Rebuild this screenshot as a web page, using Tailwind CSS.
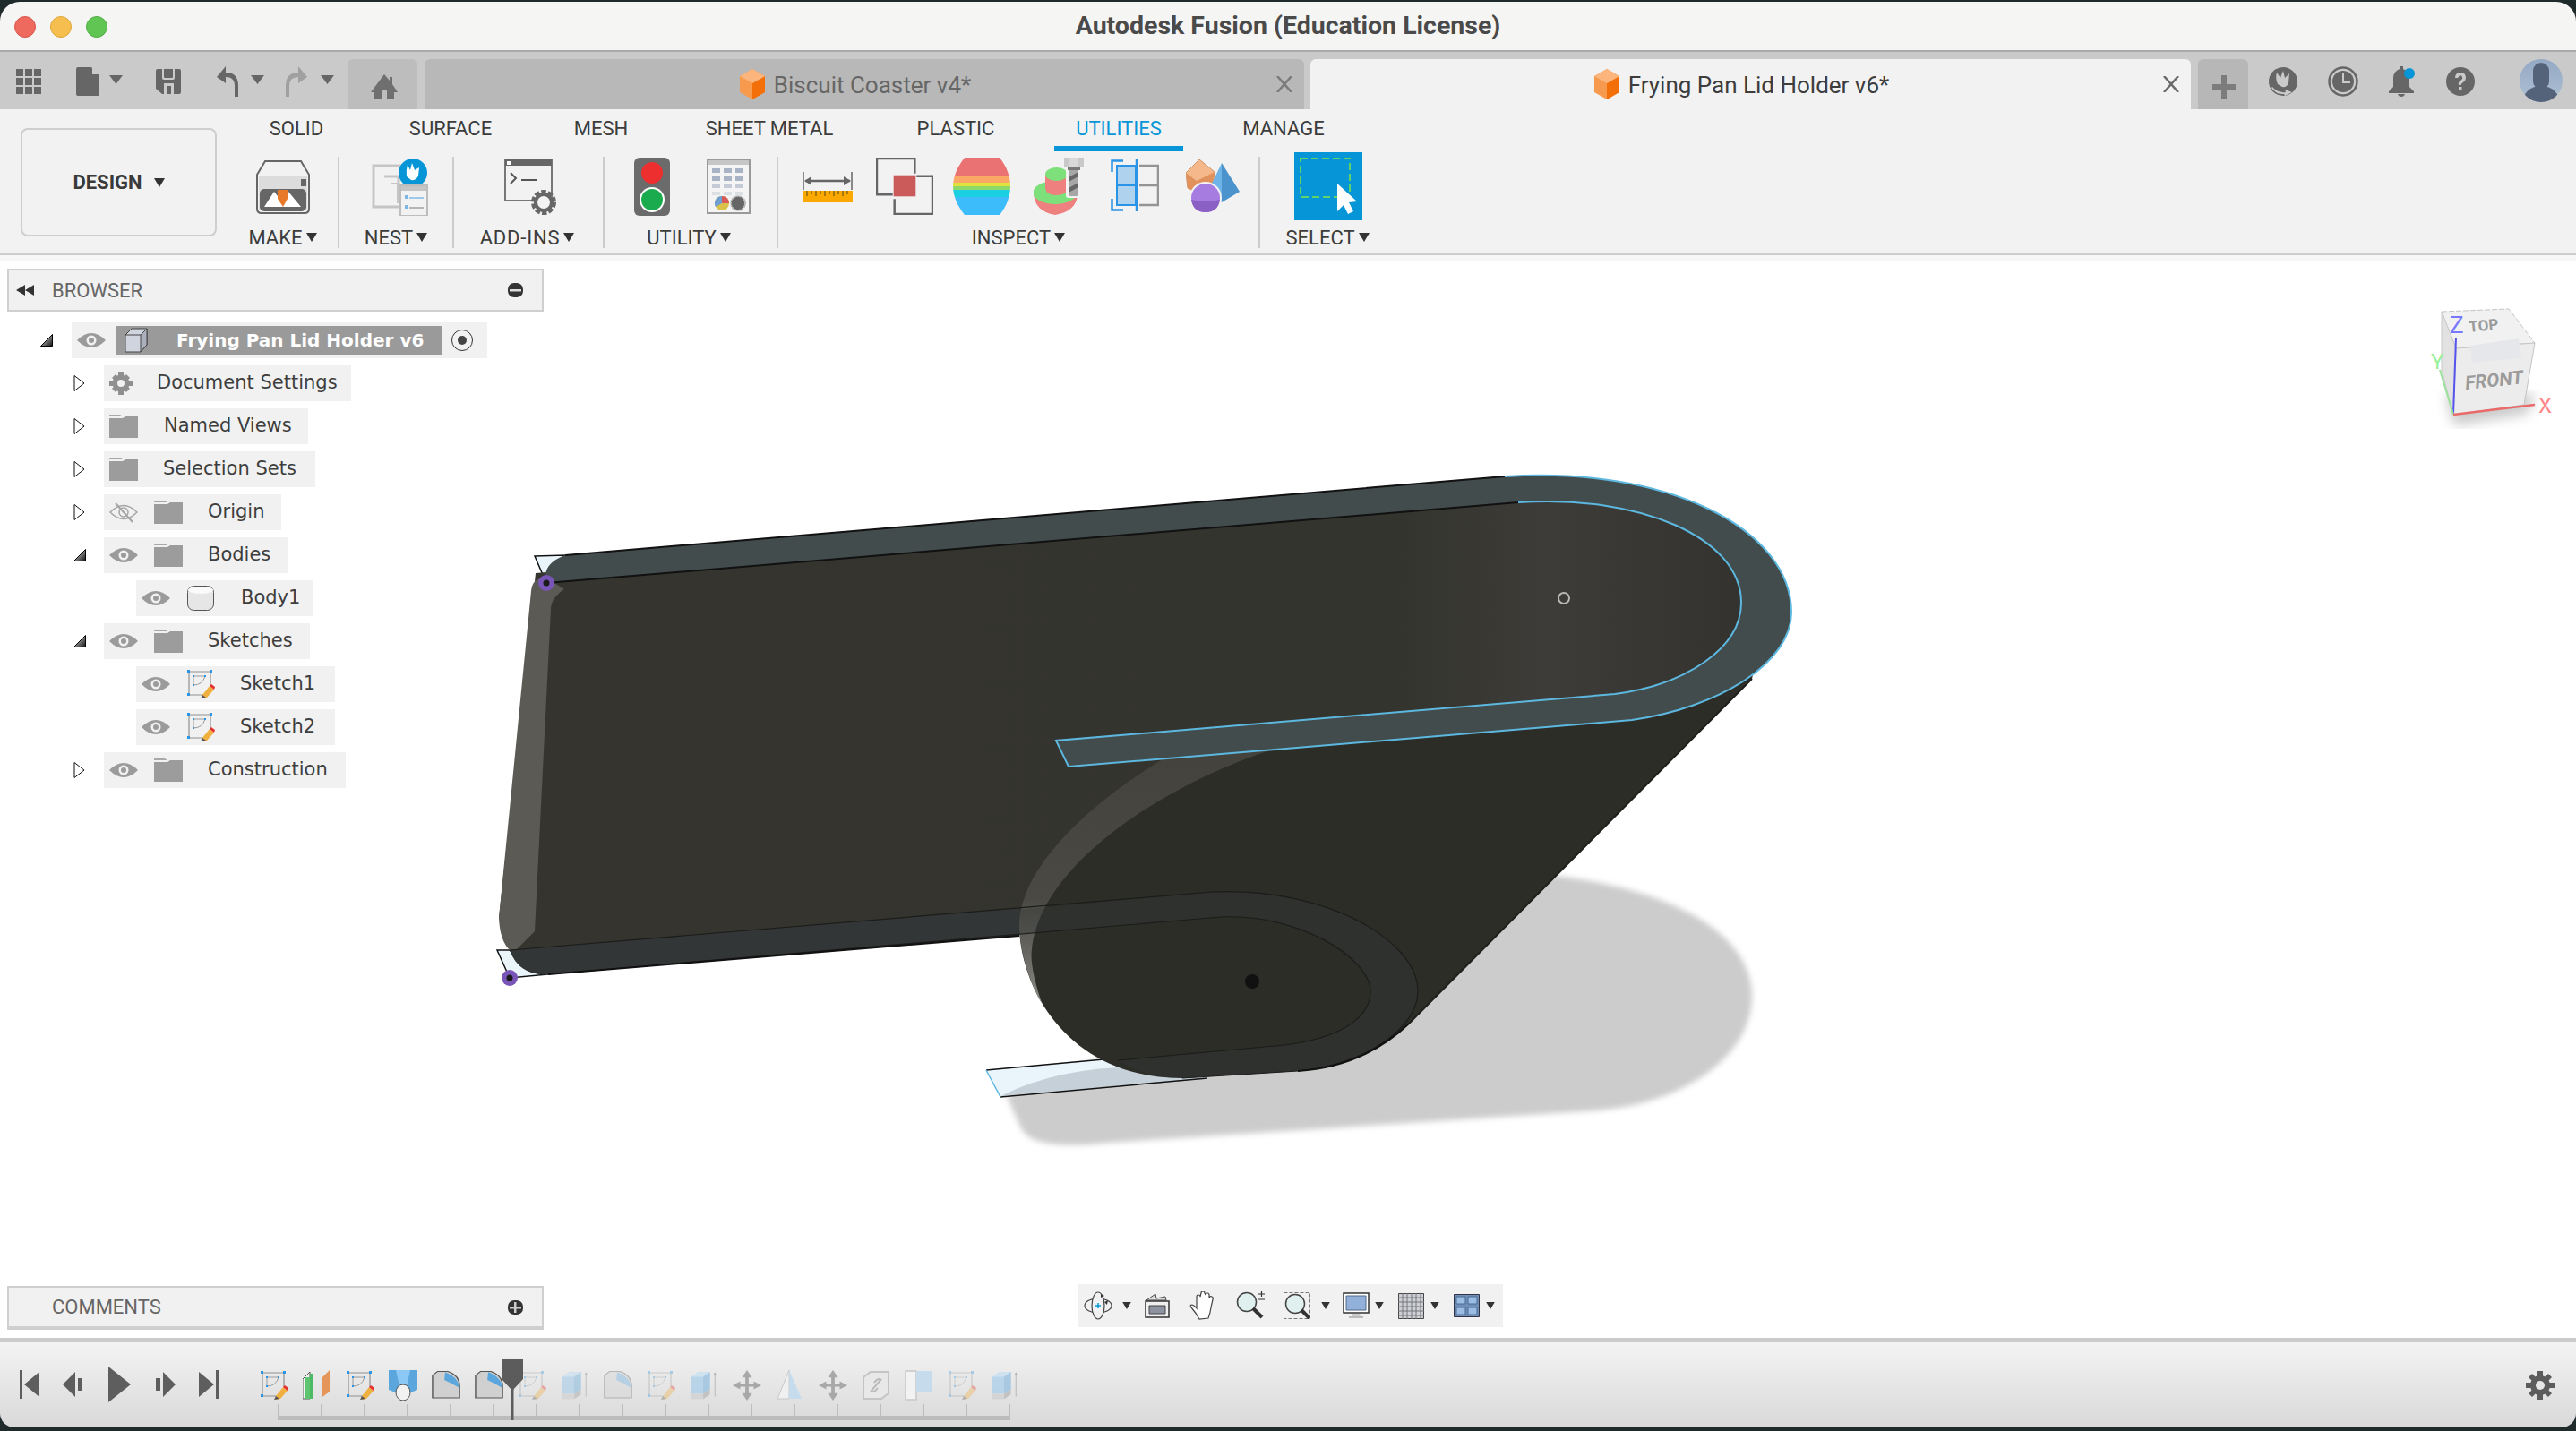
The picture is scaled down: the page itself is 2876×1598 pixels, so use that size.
<!DOCTYPE html>
<html lang="en">
<head>
  <meta charset="UTF-8">
  <title>Autodesk Fusion</title>
  <script src="https://cdn.jsdelivr.net/npm/@tailwindcss/browser@4"></script>
</head>
<body class="bg-[#1f2a2a] overflow-hidden font-['Roboto',sans-serif]">

  <!-- shared icons -->
  <svg class="absolute w-0 h-0">
    <defs>
      <linearGradient id="triGrad" x1="0" y1="0" x2="1" y2="1"><stop offset="0" stop-color="#eee"/><stop offset="1" stop-color="#111"/></linearGradient>
      <linearGradient id="faceGrad" x1="0" y1="0" x2="1" y2="0"><stop offset="0" stop-color="#35342f"/><stop offset="0.72" stop-color="#34342f"/><stop offset="0.84" stop-color="#3d3c38"/><stop offset="1" stop-color="#33322e"/></linearGradient>
      <linearGradient id="rimGrad" gradientUnits="userSpaceOnUse" x1="0" y1="830" x2="0" y2="1120"><stop offset="0" stop-color="#43423d"/><stop offset="0.6" stop-color="#4a4944"/><stop offset="0.8" stop-color="#66655f"/><stop offset="1" stop-color="#8a8984"/></linearGradient>
      <clipPath id="zebraClip"><path d="M13 0h39C60 10 64 21 64 32S60 54 52 64H13C5 54 0 43 0 32S5 10 13 0z"/></clipPath>
      <filter id="soft"><feGaussianBlur stdDeviation="3"/></filter>
      <filter id="cubeShadow"><feGaussianBlur stdDeviation="7"/></filter>
      <symbol id="caret" viewBox="0 0 12 10"><path d="M0 0h12L6 10z" fill="#333"/></symbol>
      <symbol id="caretGray" viewBox="0 0 15 10"><path d="M0 0h15L7.500 10z" fill="#666"/></symbol>
      <symbol id="eye" viewBox="0 0 32 22"><path d="M0 11Q16-5 32 11 16 27 0 11z" fill="#9b9b9b"/><circle cx="16" cy="11" r="5.500" fill="#f1f1f1"/><circle cx="16" cy="11" r="3" fill="#9b9b9b"/></symbol>
      <symbol id="eyeOff" viewBox="0 0 32 24"><path d="M1 12Q16-3 31 12 16 27 1 12z" fill="none" stroke="#a5a5a5" stroke-width="1.500"/><circle cx="16" cy="12" r="5" fill="none" stroke="#a5a5a5" stroke-width="1.500"/><path d="M7 2l19 21" stroke="#a5a5a5" stroke-width="2"/></symbol>
      <symbol id="folder" viewBox="0 0 32 26"><path d="M0 0h12l3 2h-15z" fill="#a8a8a8"/><path d="M0 4h15l3-2h14v24H0z" fill="#9c9c9c"/></symbol>
      <symbol id="triOpen" viewBox="0 0 14 14"><path d="M13.500.5v13H.5z" fill="url(#triGrad)" stroke="#000"/></symbol>
      <symbol id="triClosed" viewBox="0 0 13 18"><path d="M1 .5L12 9 1 17.500z" fill="#fff" stroke="#111"/></symbol>
      <symbol id="sketch" viewBox="0 0 32 32">
        <path d="M3 2h24M3 2v26M3 28h16" stroke="#8f8f8f" stroke-width="1.200" fill="none"/><path d="M27 2v16" stroke="#8f8f8f" stroke-width="1.200"/>
        <path d="M8 7h13M8 7v10M8 17Q18 17 21 7" stroke="#9a9a9a" fill="none"/>
        <path d="M1 0h3v3H1zM26 0h3v3h-3zM1 26h3v3H1zM7 6h2v2H7zM20 6h2v2h-2zM7 16h2v2H7z" fill="#2a94e6"/>
        <path d="M18 28l8-10 5 4-8 9-5 1z" fill="#f0b040"/><path d="M26 18l2-2 4 3-1 3z" fill="#e63030"/><path d="M16 32l2-4 4 3z" fill="#555"/>
      </symbol>
      <symbol id="extrude" viewBox="0 0 34 46">
        <path d="M2 10l8-7h14v26l-8 7H2z" fill="#a6cdea"/><path d="M2 10l8-7h14l-8 7z" fill="#c6e0f3"/><path d="M16 10l8-7v26l-8 7z" fill="#8fbde0"/>
        <path d="M2 36h14v8H2z" fill="#cfcfcf"/><path d="M16 36l8-7v8l-8 7z" fill="#b5b5b5"/><path d="M30 6v34" stroke="#999"/><path d="M28 8l2-5 2 5z" fill="#999"/>
      </symbol>
      <symbol id="fillet" viewBox="0 0 34 46">
        <path d="M1 42V8l6-6h12q14 6 14 22v18z" fill="#d0d0d0" stroke="#555" stroke-width="1.500"/>
        <path d="M16 3q16 8 17 24-8-6-18-12z" fill="#5aa6dd"/>
      </symbol>
      <symbol id="move" viewBox="0 0 34 46"><path d="M17 0l6 11h-4v10h6v-4l9 6-9 6v-4h-6v10h4l-6 11-6-11h4V25H9v4l-9-6 9-6v4h6V11h-4z" fill="#a8a8a8"/></symbol>
    </defs>
  </svg>

  <div class="relative flex flex-col w-[2876px] h-[1598px] pt-[2px]">
    <!-- title bar -->
    <div class="relative flex items-center justify-center h-[56px] bg-[#f5f5f4] rounded-t-[22px] border-b-2 border-[#a9a9a9]">
      <div class="absolute left-[16px] top-[16px] flex gap-[16px]">
        <div class="w-[24px] h-[24px] rounded-full bg-[#ee6a5f] border border-[#d9574c]"></div>
        <div class="w-[24px] h-[24px] rounded-full bg-[#f6be4f] border border-[#dfa63a]"></div>
        <div class="w-[24px] h-[24px] rounded-full bg-[#61c554] border border-[#52ad46]"></div>
      </div>
      <span class="text-[28.500px] font-bold text-[#4a4a4a] leading-none">Autodesk Fusion (Education License)</span>
    </div>

    <!-- tab bar -->
    <div class="flex items-end h-[64px] bg-[#cacaca]">
      <div class="flex items-center w-[388px] h-[63px] pl-[18px]">
        <svg width="28" height="28" viewBox="0 0 28 28"><path d="M0 0h8v8H0zM10 0h8v8h-8zM20 0h8v8h-8zM0 10h8v8H0zM10 10h8v8h-8zM20 10h8v8h-8zM0 20h8v8H0zM10 20h8v8h-8zM20 20h8v8h-8z" fill="#666"/></svg>
        <svg class="ml-[39px]" width="26" height="32" viewBox="0 0 26 32"><path d="M2 0h15l9 9v21q0 2-2 2H2q-2 0-2-2V2q0-2 2-2z" fill="#666"/><path d="M18 0l8 8h-8z" fill="#cacaca"/></svg>
        <svg class="ml-[11px] mb-[4px]" width="15" height="10"><use href="#caretGray"/></svg>
        <svg class="ml-[37px]" width="28" height="28" viewBox="0 0 28 28"><path d="M2 0h24q2 0 2 2v24q0 2-2 2H7l-7-6V2q0-2 2-2z" fill="#666"/><path d="M7 0h14v10q0 2-2 2H9q-2 0-2-2zM9 28V16h11v12h-3v-9h-5v9z" fill="#cacaca"/><path d="M9 0h10v9q0 1-1 1h-8q-1 0-1-1z" fill="#666"/></svg>
        <svg class="ml-[38px]" width="27" height="36" viewBox="0 0 27 36"><path d="M2 13L12 1v7q14 0 14 15v12h-4V23q0-10-10-10v7z" fill="#666"/></svg>
        <svg class="ml-[13px] mb-[4px]" width="15" height="10"><use href="#caretGray"/></svg>
        <svg class="ml-[23px]" width="27" height="36" viewBox="0 0 27 36"><path d="M25 13L15 1v7Q1 8 1 23v12h4V23q0-10 10-10v7z" fill="#a0a0a0"/></svg>
        <svg class="ml-[13px] mb-[4px]" width="15" height="10"><use href="#caretGray"/></svg>
      </div>
      <div class="flex items-center justify-center w-[78px] h-[56px] bg-[#bdbdbd] rounded-t-[6px] pt-[6px] pl-[4px]">
        <svg width="30" height="28" viewBox="0 0 30 28"><path d="M15 0l6 7V3h3v8l6 9h-4v8H4v-8H0z" fill="#6f6f6f"/><path d="M13 18h5v10h-5z" fill="#bdbdbd"/></svg>
      </div>
      <div class="relative flex items-center justify-center gap-[10px] w-[982px] h-[56px] ml-[8px] pr-[20px] pt-[2px] bg-[#b8b8b8] rounded-t-[6px] text-[26px] text-[#666]">
        <svg class="-mt-[2px]" width="28" height="34" viewBox="0 0 28 34"><path d="M14 0l14 8v18l-14 8-14-8V8z" fill="#f79a4e"/><path d="M14 16l14-8v18l-14 8z" fill="#f26f0a"/><path d="M14 0l14 8-14 8L0 8z" fill="#fbb57d"/></svg>
        <span>Biscuit Coaster v4*</span>
        <svg class="absolute right-[13px] top-[19px]" width="18" height="18" viewBox="0 0 18 18"><path d="M1 0l16 18M17 0L1 18" stroke="#7a7a7a" stroke-width="2.500"/></svg>
      </div>
      <div class="relative flex items-center justify-center gap-[10px] w-[983px] h-[56px] ml-[7px] pr-[20px] pt-[2px] bg-[#f2f2f2] rounded-t-[6px] text-[26px] text-[#3d3d3d]">
        <svg class="-mt-[2px]" width="28" height="34" viewBox="0 0 28 34"><path d="M14 0l14 8v18l-14 8-14-8V8z" fill="#f79a4e"/><path d="M14 16l14-8v18l-14 8z" fill="#f26f0a"/><path d="M14 0l14 8-14 8L0 8z" fill="#fbb57d"/></svg>
        <span>Frying Pan Lid Holder v6*</span>
        <svg class="absolute right-[13px] top-[19px]" width="18" height="18" viewBox="0 0 18 18"><path d="M1 0l16 18M17 0L1 18" stroke="#6a6a6a" stroke-width="2.500"/></svg>
      </div>
      <div class="flex items-center justify-center w-[56px] h-[56px] ml-[8px] bg-[#b7b7b7] rounded-t-[6px] pt-[6px] pl-[2px]">
        <svg width="26" height="26" viewBox="0 0 26 26"><path d="M10 0h6v10h10v6H16v10h-6V16H0v-6h10z" fill="#7c7c7c"/></svg>
      </div>
      <div class="flex items-center h-[63px] pl-[23px]">
        <svg width="32" height="32" viewBox="0 0 32 32"><circle cx="16" cy="16" r="16" fill="#666"/><path d="M9 6l4 6 3-8 2 8 5-5-1 11q-2 5-7 4l-5-3q-3-6-1-13zM4 22q6 7 15 6l-1-3 8 3-8 4-1-2Q8 31 3 23z" fill="#cacaca"/></svg>
        <svg class="ml-[34px]" width="34" height="34" viewBox="0 0 34 34"><circle cx="17" cy="17" r="15.500" fill="none" stroke="#666" stroke-width="2.500"/><circle cx="17" cy="17" r="12" fill="#666"/><path d="M16 8h2v9h7v2h-9z" fill="#cacaca"/></svg>
        <svg class="ml-[33px]" width="30" height="34" viewBox="0 0 30 34"><path d="M13 0h4v3q7 3 7 10v10l5 5v2H1v-2l5-5V13q0-7 7-10z" fill="#666"/><path d="M11 31h8q-1 3-4 3t-4-3z" fill="#666"/><circle cx="24" cy="8" r="6" fill="#0696d7"/></svg>
        <svg class="ml-[35px]" width="32" height="32" viewBox="0 0 32 32"><circle cx="16" cy="16" r="16" fill="#666"/><path d="M10 12q0-6 6-6t6 6q0 3-3 5t-2 3h-3q-1-3 2-5t2-4-2-2-3 3zM14 22h3.500v4H14z" fill="#cacaca"/></svg>
        <div class="relative self-start ml-[50px] mt-[7px] w-[48px] h-[48px] rounded-full overflow-hidden bg-gradient-to-b from-[#93a8c4] to-[#afc0d3]">
          <div class="absolute left-[15px] top-[4px] w-[18px] h-[30px] rounded-full bg-[#54627a]"></div>
          <div class="absolute left-[3px] top-[30px] w-[42px] h-[24px] rounded-t-[20px] bg-[#54627a]"></div>
        </div>
      </div>
    </div>

    <!-- ribbon -->
    <div class="flex h-[163px] pl-[23px] bg-[#f2f2f2] border-b-2 border-[#cdcdcd]">
      <div class="flex items-center justify-center gap-[13px] w-[219px] h-[121px] mt-[21px] border-2 border-[#cecece] rounded-[8px]">
        <span class="text-[22px] font-bold text-[#3a3a3a]">DESIGN</span>
        <svg width="12" height="10"><use href="#caret"/></svg>
      </div>
      <div class="ml-[9px] flex flex-col">
        <div class="flex gap-[47px] h-[53px] pl-[26px] text-[22px] text-[#3c3c3c] text-center leading-[44px]">
          <div class="w-[108px]">SOLID</div>
          <div class="w-[142px]">SURFACE</div>
          <div class="w-[100px]">MESH</div>
          <div class="w-[182px]">SHEET METAL</div>
          <div class="w-[140px]">PLASTIC</div>
          <div class="w-[144px] h-[47px] -ml-[7px] text-[#0696d7] border-b-[6px] border-[#0696d7]">UTILITIES</div>
          <div class="w-[130px]">MANAGE</div>
        </div>
        <div class="flex h-[102px] text-[22px] text-[#3c3c3c]">
          <!-- make -->
          <div class="flex flex-col items-center justify-between w-[128px] border-r-2 border-[#cccccc]">
            <svg class="mt-[4px] ml-[3px]" width="60" height="60" viewBox="0 0 60 60"><path d="M1 16L10 1h40l9 15v38q0 5-5 5H6q-5 0-5-5z" fill="#f2f2f2" stroke="#666" stroke-width="2"/><path d="M3 17h54v38H3z" fill="#dcdcdc"/><path d="M50 21h6v8h-6z" fill="#666"/><rect x="4" y="32" width="52" height="25" rx="5" fill="#666"/><path d="M9 52l11-17 8 10 8-10 14 17z" fill="#fff"/><path d="M24 33h11v10l-5 9-6-9z" fill="#e8792b"/></svg>
            <div class="flex items-center gap-[4px] h-[24px] ml-[3px]"><span>MAKE</span><svg width="12" height="10"><use href="#caret"/></svg></div>
          </div>
          <!-- nest -->
          <div class="flex flex-col items-center justify-between w-[128px] border-r-2 border-[#cccccc]">
            <svg class="mt-[2px] ml-[10px]" width="64" height="64" viewBox="0 0 64 64"><path d="M2 8h34v46H2z" fill="none" stroke="#c5c5c5" stroke-width="3"/><path d="M14 20h16v30" fill="none" stroke="#c5c5c5" stroke-width="3"/><path d="M21 28h8v22" fill="none" stroke="#c5c5c5" stroke-width="2"/><circle cx="46" cy="16" r="16" fill="#0696d7"/><path d="M40 7l3 6 2-8 3 8 5-3-1 9q-2 6-8 5l-5-4q-1-7 1-13z" fill="#fff"/><path d="M32 30h30v34H32z" fill="#f2f2f2" stroke="#bdbdbd" stroke-width="2"/><path d="M33 31h28v5H33z" fill="#c5c5c5"/><path d="M37 41h3v4h-3zM37 52h3v4h-3z" fill="#7bb7e6"/><path d="M42 43h16v2H42z" fill="#9cc9ec"/><path d="M42 54h16v2H42z" fill="#b5b5b5"/></svg>
            <div class="flex items-center gap-[4px] h-[24px]"><span>NEST</span><svg width="12" height="10"><use href="#caret"/></svg></div>
          </div>
          <!-- add-ins -->
          <div class="flex flex-col items-center justify-between w-[168px] border-r-2 border-[#cccccc]">
            <svg class="mt-[2px] ml-[6px]" width="60" height="64" viewBox="0 0 60 64"><path d="M1 1h52v46H1z" fill="#f2f2f2" stroke="#777" stroke-width="2"/><path d="M1 1h52v7H1z" fill="#666"/><path d="M3 3h5v4H3z" fill="#fff"/><path d="M7 16l6 6-6 6" fill="none" stroke="#555" stroke-width="2"/><path d="M19 24h17" stroke="#555" stroke-width="2"/><circle cx="44" cy="49" r="11" fill="#f2f2f2" stroke="#666" stroke-width="6" stroke-dasharray="5 2"/><circle cx="44" cy="49" r="9" fill="none" stroke="#666" stroke-width="4"/></svg>
            <div class="flex items-center gap-[4px] h-[24px] -ml-[3px]"><span class="tracking-[0.8px]">ADD-INS</span><svg width="12" height="10"><use href="#caret"/></svg></div>
          </div>
          <!-- utility -->
          <div class="flex flex-col items-center justify-between w-[194px] border-r-2 border-[#cccccc]">
            <div class="flex gap-[41px] mt-[1px] ml-[5px]">
              <svg width="40" height="65" viewBox="0 0 40 65"><rect width="40" height="65" rx="6" fill="#6b6b6b"/><ellipse cx="20" cy="17" rx="12" ry="12" fill="#ee2f2f"/><circle cx="20" cy="47" r="14" fill="#fff"/><circle cx="20" cy="47" r="12" fill="#1aab4e"/></svg>
              <svg class="mt-[1px]" width="50" height="62" viewBox="0 0 50 62"><path d="M1 1h47v60H1z" fill="#f4f4f4" stroke="#9a9a9a" stroke-width="2"/><path d="M2 2h45v5H2z" fill="#c6c6c6"/><path d="M6 11h9v5H6zM19 11h9v5h-9zM32 11h9v5h-9zM6 20h9v5H6zM19 20h9v5h-9zM32 20h9v5h-9z" fill="#a8b4c6"/><path d="M6 29h9v4H6zM19 29h9v4h-9zM32 29h9v4h-9z" fill="#c4cbd6"/><path d="M6 37h9v4H6zM19 37h9v4h-9zM32 37h9v4h-9z" fill="#dcdfe4"/><circle cx="17" cy="50" r="8" fill="#d9c14a"/><path d="M17 50V42a8 8 0 0 1 8 8z" fill="#d85a5a"/><path d="M17 50l-7 4a8 8 0 0 1 7-12z" fill="#6e9fd0"/><circle cx="35" cy="50" r="8" fill="#666" stroke="#bbb" stroke-width="2" stroke-dasharray="2 1"/></svg>
            </div>
            <div class="flex items-center gap-[4px] h-[24px] -ml-[4px]"><span>UTILITY</span><svg width="12" height="10"><use href="#caret"/></svg></div>
          </div>
          <!-- inspect -->
          <div class="flex flex-col items-center justify-between w-[538px] border-r-2 border-[#cccccc]">
            <div class="flex items-start self-start h-[66px] mt-[1px] ml-[27px]">
              <svg class="mt-[16px]" width="56" height="34" viewBox="0 0 56 34"><path d="M1 0v20M55 0v20" stroke="#666" stroke-width="1.500"/><path d="M3 10h50" stroke="#666" stroke-width="2.500"/><path d="M2 10l8-5v10zM54 10l-8-5v10z" fill="#666"/><path d="M0 21h56v13H0z" fill="#fba800"/><path d="M5 21v6M10 21v4M15 21v6M20 21v4M25 21v6M30 21v4M35 21v6M40 21v4M45 21v6M50 21v4" stroke="#8a6a10" stroke-width="1.500"/></svg>
              <svg class="ml-[26px]" width="64" height="64" viewBox="0 0 65 65"><path d="M19 42H1V1H44V18M46 21H64V64H21V47" fill="none" stroke="#666" stroke-width="2.500"/><path d="M20 20h25v24H20z" fill="#cb5a5a"/></svg>
              <svg class="ml-[22px]" width="64" height="64" viewBox="0 0 64 64"><g clip-path="url(#zebraClip)"><path d="M0 0h64v20H0z" fill="#ea7272"/><path d="M0 20h64v8H0z" fill="#fba765"/><path d="M0 28h64v4H0z" fill="#dfe23a"/><path d="M0 32h64v4H0z" fill="#8ed86a"/><path d="M0 36h64v8H0z" fill="#1bd0e0"/><path d="M0 44h64v20H0z" fill="#3dbcfb"/></g></svg>
              <svg class="ml-[26px]" width="56" height="64" viewBox="0 0 56 64"><path d="M0 38Q0 60 24 64 48 60 49 41z" fill="#ef8080"/><ellipse cx="24" cy="39" rx="24.500" ry="13" fill="#7ee07a"/><path d="M13 18V34Q14 42 25 42 37 42 38 34V18z" fill="#ef8080"/><ellipse cx="25.500" cy="18.500" rx="12.500" ry="7.500" fill="#7ee07a"/><path d="M36 14h16v28q0 3-3 3h-10q-3 0-3-3z" fill="#f2f2f2"/><path d="M34 0h22v10H34z" fill="#c9c9c9"/><path d="M39 0h11v10H39z" fill="#d9d9d9"/><path d="M38 10h14v4H38z" fill="#777"/><path d="M39 14h11v27q0 2-2 2h-7q-2 0-2-2z" fill="#a6a6a6"/><path d="M39 22l11-6v5l-11 6zM39 34l11-6v5l-11 6z" fill="#666"/></svg>
              <svg class="ml-[30px] mt-[2px]" width="54" height="58" viewBox="0 0 54 58"><path d="M32 7H53V51H32M32 29H53" fill="none" stroke="#949494" stroke-width="2.500"/><path d="M7 7h21v44H7z" fill="#afd2ee" stroke="#2a94e6" stroke-width="2"/><path d="M7 29h22" stroke="#2a94e6" stroke-width="2"/><path d="M29 0v58" stroke="#2a94e6" stroke-width="2.500"/><path d="M14 1.500H1.500V14M14 56.500H1.500V44" fill="none" stroke="#2a94e6" stroke-width="2.500"/></svg>
              <svg class="ml-[30px] mt-[2px]" width="60" height="60" viewBox="0 0 60 60"><path d="M15 0L32 14 30 30 15 38 2 32 0 15z" fill="#f4b88a" stroke="#cf9468"/><path d="M0 15L12 24 15 38 2 32z" fill="#e0915c"/><path d="M12 24L32 14 30 30 15 38z" fill="#e0915c"/><path d="M40 4L26 33 40 48z" fill="#6fb4e6"/><path d="M40 4L60 36 40 48z" fill="#4a93cc"/><circle cx="22" cy="43" r="18" fill="#f2f2f2"/><circle cx="22" cy="43" r="16" fill="#a67ce0"/><path d="M6 45q16 4 32 0-2 14-16 14T6 45z" fill="#8b60c4"/></svg>
            </div>
            <div class="flex items-center gap-[4px] h-[24px]"><span>INSPECT</span><svg width="12" height="10"><use href="#caret"/></svg></div>
          </div>
          <!-- select -->
          <div class="flex flex-col items-center justify-between w-[154px] pr-[2px]">
            <svg class="-mt-[5px]" width="76" height="76" viewBox="0 0 76 76"><path d="M0 0h76v76H0z" fill="#0696d7"/><path d="M7 7h55v43H7z" fill="none" stroke="#5fd36a" stroke-width="2" stroke-dasharray="8 4"/><path d="M48 35v31l7-7 5 10 6-3-5-10 9-1z" fill="#fff"/></svg>
            <div class="flex items-center gap-[4px] h-[24px] -ml-[2px]"><span>SELECT</span><svg width="12" height="10"><use href="#caret"/></svg></div>
          </div>
        </div>
      </div>
    </div>
    <div class="h-[7px] bg-[#f7f7f7]"></div>

    <!-- canvas -->
    <div class="relative flex-1 bg-white">
      <svg class="absolute inset-0" width="2876" height="1202" viewBox="0 292 2876 1202">
        <!-- ground shadow -->
        <path d="M1124 1224L1726 977C1860 990 1956 1040 1956 1112C1956 1180 1880 1232 1784 1240L1240 1276C1180 1282 1150 1278 1140 1260Z" fill="#cccccc" filter="url(#soft)"/>
        <!-- construction quads -->
        <path d="M1101 1195L1348 1170V1204L1117 1225Z" fill="#eaf4fb"/>
        <path d="M1117 1224Q1190 1188 1290 1192L1348 1204Z" fill="#c5d0d8"/>
        <path d="M1101 1195L1243 1182M1117 1225L1348 1204" stroke="#111" stroke-width="1.500"/>
        <path d="M1101 1195L1117 1225" stroke="#5db8e0" stroke-width="1.500"/>
        <path d="M597 621L631 620 610 651Z" fill="#eaf4fb" stroke="#111" stroke-width="1.500"/>
        <path d="M555 1061L569 1092 612 1088 569 1061Z" fill="#eaf4fb" stroke="#111" stroke-width="1.500"/>
        <!-- main wall -->
        <path d="M598 640L1695 550C1830 545 1950 600 1950 673C1950 725 1880 770 1803 780L1401 837L1138 1020V1045L612 1088Q580 1090 569 1061L557 1025Z" fill="url(#faceGrad)"/>
        <path d="M610 645Q594 645 593 660L557 1025Q558 1050 569 1061L575 1062L597 1040L615 680Q615 668 630 658Z" fill="#5b5a54"/>
        <!-- lower band of the wall -->
        <path d="M569 1061L1145 1014V1043L612 1088Q580 1090 569 1061Z" fill="#333636"/>
        <!-- curved lobe -->
        <path d="M1345 822C1230 880 1138 965 1138 1033C1138 1100 1190 1204 1320 1204L1449 1196C1510 1192 1550 1165 1573 1143L1956 758L1965 720L1900 775L1822 790Z" fill="#2d2d28"/>
        <path d="M1345 822C1230 880 1138 965 1138 1033C1138 1060 1150 1100 1163 1120C1155 1095 1150 1075 1152 1060C1160 970 1290 880 1420 837Z" fill="url(#rimGrad)"/>
        <path d="M1138 1016L1353 996C1480 990 1583 1050 1583 1107C1583 1150 1520 1190 1449 1196L1320 1204Q1280 1204 1248 1184L1434 1167C1490 1160 1530 1140 1530 1107C1530 1070 1450 1020 1363 1024L1138 1043Z" fill="#33383a" fill-opacity="0.35"/>
        <path d="M569 1061L1353 996C1480 990 1583 1050 1583 1107C1583 1150 1520 1190 1449 1196L1320 1204M612 1088L1363 1024C1450 1020 1530 1070 1530 1107C1530 1140 1490 1160 1434 1167L1248 1184" fill="none" stroke="#1c1c1a" stroke-width="1.200"/>
        <path d="M1573 1143L1956 758" stroke="#1e1e1b" stroke-width="2"/>
        <path d="M612 1088L1138 1045M1449 1196C1510 1192 1550 1165 1573 1143" fill="none" stroke="#111" stroke-width="2"/>
        <!-- top rim -->
        <path d="M631 620L1680 532C1860 520 2000 590 2000 684C2000 740 1920 790 1822 804L1193 856L1179 827L1803 775C1880 765 1944 725 1944 673C1944 600 1830 552 1695 561L610 651Q604 630 631 620Z" fill="#434c4c"/>
        <path d="M631 620L1680 532M610 651L1695 561" stroke="#111" stroke-width="2"/>
        <path d="M1680 532C1860 520 2000 590 2000 684C2000 740 1920 790 1822 804L1193 856L1179 827L1803 775C1880 765 1944 725 1944 673C1944 600 1830 552 1695 561" fill="none" stroke="#5db8e0" stroke-width="2"/>
        <!-- points -->
        <circle cx="610" cy="651" r="9" fill="#7a55b8"/><circle cx="610" cy="651" r="3.500" fill="#1a1a1a"/>
        <circle cx="569" cy="1092" r="9" fill="#7a55b8"/><circle cx="569" cy="1092" r="3.500" fill="#1a1a1a"/>
        <circle cx="1746" cy="668" r="6" fill="none" stroke="#b8b8b8" stroke-width="2"/>
        <circle cx="1398" cy="1096" r="8" fill="#111"/>
        <!-- view cube -->
        <path d="M2730 440L2740 475 2822 462 2830 440Z" fill="#888" opacity="0.45" filter="url(#cubeShadow)"/>
        <path d="M2726 348L2801 345 2830 383 2742 389Z" fill="#f1f1f1" stroke="#c4c4c4" stroke-dasharray="6 2"/>
        <path d="M2742 389L2830 383 2818 452 2739 463Z" fill="#ececec" stroke="#c4c4c4"/>
        <path d="M2726 348L2742 389 2739 463 2726 413Z" fill="#e2e2e2" stroke="#c8c8c8"/>
        <path d="M2758 386L2812 378 2815 400 2760 405Z" fill="#e6e7ea"/>
        <text x="2757" y="371" font-size="17" font-weight="700" fill="#9a9a9a" transform="rotate(-6 2757 371)">TOP</text>
        <text x="2753" y="435" font-size="21" font-weight="700" font-style="italic" fill="#9b9b9b" transform="rotate(-6 2753 435)">FRONT</text>
        <path d="M2742 377L2739 463" stroke="#5555ee" stroke-width="2"/>
        <path d="M2724 413L2739 463" stroke="#9be29b" stroke-width="2"/>
        <path d="M2739 463L2830 452" stroke="#ea6a6a" stroke-width="2.500"/>
        <text x="2735" y="372" font-size="26" fill="#7777ff">Z</text>
        <text x="2714" y="412" font-size="24" fill="#99f099">Y</text>
        <text x="2834" y="461" font-size="24" fill="#ff8888">X</text>
      </svg>

      <!-- browser and comments -->
      <div class="relative flex flex-col justify-between w-[599px] h-full ml-[8px] pt-[8px] pb-[9px] font-['DejaVu_Sans',sans-serif] text-[21px] text-[#3e3e3e]">
        <div>
          <div class="flex items-center h-[48px] bg-[#f1f1f1] border-2 border-[#cfcfcf] pl-[8px] font-['Roboto',sans-serif] text-[22px] text-[#666]">
            <svg width="20" height="12" viewBox="0 0 20 12"><path d="M0 6l10-6v12zM10 6l10-6v12z" fill="#333"/></svg>
            <span class="ml-[20px]">BROWSER</span>
            <svg class="ml-auto mr-[21px]" width="17" height="16" viewBox="0 0 17 16"><rect width="17" height="16" rx="7" fill="#333"/><path d="M2 7h13v2.500H2z" fill="#ddd"/></svg>
          </div>
          <div class="mt-[12px]">
            <!-- root -->
            <div class="flex items-center h-[40px] mb-[8px]">
              <svg class="ml-[37px]" width="14" height="14"><use href="#triOpen"/></svg>
              <div class="flex items-center w-[464px] h-[40px] ml-[21px] pl-[6px] bg-[#f1f1f1]">
                <svg width="32" height="22"><use href="#eye"/></svg>
                <div class="flex items-center w-[364px] h-[32px] ml-[12px] pl-[9px] bg-[#9a9a9a] text-white text-[20px] font-bold">
                  <svg width="26" height="28" viewBox="0 0 26 28"><path d="M1 8l7-7h17v18l-7 8H1z" fill="#cfd4de" stroke="#444"/><path d="M18 8l7-7v18l-7 8z" fill="#aab0bc" stroke="#444"/><path d="M1 8h17" stroke="#444"/></svg>
                  <span class="ml-[32px]">Frying Pan Lid Holder v6</span>
                </div>
                <svg class="ml-[10px]" width="24" height="24" viewBox="0 0 24 24"><circle cx="12" cy="12" r="11.500" fill="#f2f2f2" stroke="#333"/><circle cx="12" cy="12" r="5" fill="#444"/></svg>
              </div>
            </div>
            <!-- document settings -->
            <div class="flex items-center h-[40px] mb-[8px] pl-[74px]">
              <svg width="13" height="18"><use href="#triClosed"/></svg>
              <div class="flex items-center w-[276px] h-[40px] ml-[21px] pl-[6px] bg-[#f1f1f1]">
                <svg width="26" height="26" viewBox="0 0 26 26"><circle cx="13" cy="13" r="9.500" fill="#8f8f8f"/><circle cx="13" cy="13" r="4" fill="#f1f1f1"/><path d="M10 0h6v5h-6zM10 21h6v5h-6zM0 10h5v6H0zM21 10h5v6h-5zM3 7l4-4 4 4-4 4zM19 3l4 4-4 4-4-4zM3 19l4-4 4 4-4 4zM19 15l4 4-4 4-4-4z" fill="#8f8f8f"/></svg>
                <span class="ml-[27px]">Document Settings</span>
              </div>
            </div>
            <!-- named views -->
            <div class="flex items-center h-[40px] mb-[8px] pl-[74px]">
              <svg width="13" height="18"><use href="#triClosed"/></svg>
              <div class="flex items-center w-[228px] h-[40px] ml-[21px] pl-[6px] bg-[#f1f1f1]">
                <svg width="32" height="26"><use href="#folder"/></svg>
                <span class="ml-[29px]">Named Views</span>
              </div>
            </div>
            <!-- selection sets -->
            <div class="flex items-center h-[40px] mb-[8px] pl-[74px]">
              <svg width="13" height="18"><use href="#triClosed"/></svg>
              <div class="flex items-center w-[236px] h-[40px] ml-[21px] pl-[6px] bg-[#f1f1f1]">
                <svg width="32" height="26"><use href="#folder"/></svg>
                <span class="ml-[28px]">Selection Sets</span>
              </div>
            </div>
            <!-- origin -->
            <div class="flex items-center h-[40px] mb-[8px] pl-[74px]">
              <svg width="13" height="18"><use href="#triClosed"/></svg>
              <div class="flex items-center w-[198px] h-[40px] ml-[21px] pl-[6px] bg-[#f1f1f1]">
                <svg width="32" height="24"><use href="#eyeOff"/></svg>
                <svg class="ml-[18px]" width="32" height="26"><use href="#folder"/></svg>
                <span class="ml-[28px]">Origin</span>
              </div>
            </div>
            <!-- bodies -->
            <div class="flex items-center h-[40px] mb-[8px] pl-[74px]">
              <svg width="14" height="14"><use href="#triOpen"/></svg>
              <div class="flex items-center w-[206px] h-[40px] ml-[20px] pl-[6px] bg-[#f1f1f1]">
                <svg width="32" height="22"><use href="#eye"/></svg>
                <svg class="ml-[18px]" width="32" height="26"><use href="#folder"/></svg>
                <span class="ml-[28px]">Bodies</span>
              </div>
            </div>
            <!-- body1 -->
            <div class="flex items-center h-[40px] mb-[8px] pl-[144px]">
              <div class="flex items-center w-[198px] h-[40px] pl-[6px] bg-[#f1f1f1]">
                <svg width="32" height="22"><use href="#eye"/></svg>
                <svg class="ml-[19px]" width="30" height="28" viewBox="0 0 30 28"><rect x="0.500" y="0.500" width="29" height="27" rx="7" fill="#e6e6e6" stroke="#555"/><ellipse cx="15" cy="5" rx="14" ry="4" fill="#fafafa"/></svg>
                <span class="ml-[30px]">Body1</span>
              </div>
            </div>
            <!-- sketches -->
            <div class="flex items-center h-[40px] mb-[8px] pl-[74px]">
              <svg width="14" height="14"><use href="#triOpen"/></svg>
              <div class="flex items-center w-[230px] h-[40px] ml-[20px] pl-[6px] bg-[#f1f1f1]">
                <svg width="32" height="22"><use href="#eye"/></svg>
                <svg class="ml-[18px]" width="32" height="26"><use href="#folder"/></svg>
                <span class="ml-[28px]">Sketches</span>
              </div>
            </div>
            <!-- sketch1 -->
            <div class="flex items-center h-[40px] mb-[8px] pl-[144px]">
              <div class="flex items-center w-[222px] h-[40px] pl-[6px] bg-[#f1f1f1]">
                <svg width="32" height="22"><use href="#eye"/></svg>
                <svg class="ml-[18px]" width="32" height="32"><use href="#sketch"/></svg>
                <span class="ml-[28px]">Sketch1</span>
              </div>
            </div>
            <!-- sketch2 -->
            <div class="flex items-center h-[40px] mb-[8px] pl-[144px]">
              <div class="flex items-center w-[222px] h-[40px] pl-[6px] bg-[#f1f1f1]">
                <svg width="32" height="22"><use href="#eye"/></svg>
                <svg class="ml-[18px]" width="32" height="32"><use href="#sketch"/></svg>
                <span class="ml-[28px]">Sketch2</span>
              </div>
            </div>
            <!-- construction -->
            <div class="flex items-center h-[40px] pl-[74px]">
              <svg width="13" height="18"><use href="#triClosed"/></svg>
              <div class="flex items-center w-[270px] h-[40px] ml-[21px] pl-[6px] bg-[#f1f1f1]">
                <svg width="32" height="22"><use href="#eye"/></svg>
                <svg class="ml-[18px]" width="32" height="26"><use href="#folder"/></svg>
                <span class="ml-[28px]">Construction</span>
              </div>
            </div>
          </div>
        </div>
        <div class="flex items-center h-[49px] bg-[#f1f1f1] border-2 border-b-[4px] border-[#cfcfcf] pl-[48px] font-['Roboto',sans-serif] text-[22px] text-[#666]">
          <span>COMMENTS</span>
          <svg class="ml-auto mr-[21px]" width="17" height="16" viewBox="0 0 17 16"><rect width="17" height="16" rx="7" fill="#333"/><path d="M2 7h13v2.500H2z" fill="#ccc"/><path d="M7 2h2.500v12H7z" fill="#ccc"/></svg>
        </div>
      </div>

      <!-- navigation bar -->
      <div class="absolute left-[1204px] bottom-[12px] flex items-center w-[474px] h-[48px] pl-[6px] bg-[#f1f1f1]">
        <svg width="32" height="32" viewBox="0 0 32 32"><ellipse cx="16" cy="16" rx="15" ry="8" fill="none" stroke="#444" stroke-width="1.200"/><ellipse cx="16" cy="16" rx="7" ry="15" fill="#f1f1f1" stroke="#444" stroke-width="1.200"/><path d="M13 16h6M16 13v6" stroke="#0696d7" stroke-width="1.500"/><path d="M19 3l4 2-4 2zM27 10l-1 5-3-3z" fill="#333"/></svg>
        <svg class="ml-[10px]" width="12" height="8"><use href="#caret"/></svg>
        <svg class="ml-[14px]" width="28" height="28" viewBox="0 0 28 28"><path d="M2 8L12 1l1 5 10-2 1 4z" fill="#ddd" stroke="#444"/><path d="M1 9h26v18H1z" fill="#efefef" stroke="#333" stroke-width="1.500"/><path d="M5 14h18v9H5z" fill="#8d93a0" stroke="#444"/></svg>
        <svg class="ml-[22px]" width="32" height="32" viewBox="0 0 32 32"><path d="M11 31q-3-6-9-13-2-3 1-3 3 1 5 4V6q0-2 2-2t2 2l1-4q0-2 2-2t2 2l1 2q0-2 2-2t2 2v3q1-2 3-1t1 3l-2 9q-1 7-3 12z" fill="#fff" stroke="#444" stroke-width="1.200"/></svg>
        <svg class="ml-[20px]" width="32" height="32" viewBox="0 0 32 32"><circle cx="12" cy="12" r="10.500" fill="#dff0ee" stroke="#444" stroke-width="1.500"/><path d="M19 19l10 10" stroke="#333" stroke-width="4"/><path d="M25 3h7M28.500 0v6M25 9h7" stroke="#333" stroke-width="1.200"/></svg>
        <svg class="ml-[21px]" width="30" height="30" viewBox="0 0 30 30"><path d="M.5.5h29v29H.5z" fill="none" stroke="#777" stroke-dasharray="4 2"/><circle cx="13" cy="13" r="10.500" fill="#dff0ee" stroke="#444" stroke-width="1.500"/><path d="M20 20l9 9" stroke="#333" stroke-width="4"/></svg>
        <svg class="ml-[11px]" width="12" height="8"><use href="#caret"/></svg>
        <svg class="ml-[13px]" width="30" height="30" viewBox="0 0 30 30"><path d="M1 1h28v22H1z" fill="#fff" stroke="#333" stroke-width="1.500"/><path d="M4 4h22v16H4z" fill="#92b1da" stroke="#54688a"/><path d="M11 24h8l1 3H10z" fill="#ccc"/><path d="M7 27h16v2H7z" fill="#bbb"/></svg>
        <svg class="ml-[5px]" width="12" height="8"><use href="#caret"/></svg>
        <svg class="ml-[15px]" width="29" height="29" viewBox="0 0 29 29"><path d="M.5.5h28v28H.5z" fill="#cdd0d6" stroke="#444"/><path d="M5 0v29M10 0v29M15 0v29M20 0v29M25 0v29M0 5h29M0 10h29M0 15h29M0 20h29M0 25h29" stroke="#777"/></svg>
        <svg class="ml-[6px]" width="12" height="8"><use href="#caret"/></svg>
        <svg class="ml-[15px]" width="29" height="26" viewBox="0 0 29 26"><path d="M.5.5h28v25H.5z" fill="#6f8fb8" stroke="#334"/><path d="M3 3h10v8H3zM16 3h10v8H16zM3 15h10v8H3zM16 15h10v8H16z" fill="#9bbde3" stroke="#4a6a95"/></svg>
        <svg class="ml-[6px]" width="12" height="8"><use href="#caret"/></svg>
      </div>
    </div>

    <!-- timeline -->
    <div class="relative flex shrink-0 h-[100px] mb-[4px] rounded-b-[16px] bg-gradient-to-b from-[#f3f3f3] to-[#d9d9d9] border-t-[5px] border-[#cbcbcb]">
      <div class="flex items-center w-[283px] h-[96px] pl-[22px] pb-[2px]">
        <svg width="22" height="32" viewBox="0 0 22 32"><path d="M0 0h3v32H0zM5 16L22 2v28z" fill="#5e5e5e"/></svg>
        <svg class="ml-[26px]" width="26" height="32" viewBox="0 0 26 32"><path d="M0 16L14 2v28zM17 9h5v14h-5z" fill="#5e5e5e"/></svg>
        <svg class="ml-[25px]" width="25" height="40" viewBox="0 0 25 40"><path d="M0 0l25 20L0 40z" fill="#5e5e5e"/></svg>
        <svg class="ml-[24px]" width="26" height="32" viewBox="0 0 26 32"><path d="M26 16L12 2v28zM4 9h5v14H4z" fill="#5e5e5e"/></svg>
        <svg class="ml-[26px]" width="22" height="32" viewBox="0 0 22 32"><path d="M22 0h-3v32h3zM17 16L0 2v28z" fill="#5e5e5e"/></svg>
      </div>
      <div class="relative flex h-[96px]">
        <div class="w-[48px] pt-[31px]"><svg class="ml-[7px] block" width="32" height="34"><use href="#sketch"/></svg><div class="ml-[27px] mt-[4px] h-[14px] border-l-2 border-[#bdbdbd]"></div></div>
        <div class="w-[48px] pt-[31px]"><svg class="ml-[7px] block" width="32" height="34" viewBox="0 0 32 34"><path d="M0 10l8-8v30H0z" fill="#f2f2f2" stroke="#555"/><path d="M8 4h4v28H8z" fill="#4cb964"/><path d="M2 8h6v24H2z" fill="#5fc46f"/><path d="M22 30V8l8-8v24z" fill="#e69559"/></svg><div class="ml-[27px] mt-[4px] h-[14px] border-l-2 border-[#bdbdbd]"></div></div>
        <div class="w-[48px] pt-[31px]"><svg class="ml-[7px] block" width="32" height="34"><use href="#sketch"/></svg><div class="ml-[27px] mt-[4px] h-[14px] border-l-2 border-[#bdbdbd]"></div></div>
        <div class="w-[48px] pt-[31px]"><svg class="ml-[7px] block" width="32" height="34" viewBox="0 0 32 34"><path d="M0 0h32v22l-10 4H10L0 22z" fill="#5aa6dd"/><path d="M8 0h16l-4 18h-8z" fill="#8cc8f5"/><ellipse cx="16" cy="25" rx="8" ry="9" fill="#f2f2f2" stroke="#555"/></svg><div class="ml-[27px] mt-[4px] h-[14px] border-l-2 border-[#bdbdbd]"></div></div>
        <div class="w-[48px] pt-[31px]"><svg class="ml-[7px] block" width="32" height="34" viewBox="0 0 34 46" preserveAspectRatio="none"><use href="#fillet"/></svg><div class="ml-[27px] mt-[4px] h-[14px] border-l-2 border-[#bdbdbd]"></div></div>
        <div class="w-[48px] pt-[31px]"><svg class="ml-[7px] block" width="32" height="34" viewBox="0 0 34 46" preserveAspectRatio="none"><use href="#fillet"/></svg><div class="ml-[27px] mt-[4px] h-[14px] border-l-2 border-[#bdbdbd]"></div></div>
        <div class="w-[48px] pt-[31px]"><svg class="ml-[7px] block opacity-35" width="32" height="34"><use href="#sketch"/></svg><div class="ml-[27px] mt-[4px] h-[14px] border-l-2 border-[#bdbdbd]"></div></div>
        <div class="w-[48px] pt-[31px]"><svg class="ml-[7px] block opacity-60" width="32" height="34" viewBox="0 0 34 46" preserveAspectRatio="none"><use href="#extrude"/></svg><div class="ml-[27px] mt-[4px] h-[14px] border-l-2 border-[#bdbdbd]"></div></div>
        <div class="w-[48px] pt-[31px]"><svg class="ml-[7px] block opacity-35" width="32" height="34" viewBox="0 0 34 46" preserveAspectRatio="none"><use href="#fillet"/></svg><div class="ml-[27px] mt-[4px] h-[14px] border-l-2 border-[#bdbdbd]"></div></div>
        <div class="w-[48px] pt-[31px]"><svg class="ml-[7px] block opacity-35" width="32" height="34"><use href="#sketch"/></svg><div class="ml-[27px] mt-[4px] h-[14px] border-l-2 border-[#bdbdbd]"></div></div>
        <div class="w-[48px] pt-[31px]"><svg class="ml-[7px] block opacity-70" width="32" height="34" viewBox="0 0 34 46" preserveAspectRatio="none"><use href="#extrude"/></svg><div class="ml-[27px] mt-[4px] h-[14px] border-l-2 border-[#bdbdbd]"></div></div>
        <div class="w-[48px] pt-[31px]"><svg class="ml-[7px] block" width="32" height="34" viewBox="0 0 34 46" preserveAspectRatio="none"><use href="#move"/></svg><div class="ml-[27px] mt-[4px] h-[14px] border-l-2 border-[#bdbdbd]"></div></div>
        <div class="w-[48px] pt-[31px]"><svg class="ml-[7px] block" width="32" height="34" viewBox="0 0 32 34"><path d="M15 0L2 32h13z" fill="#f0f0f0" stroke="#c8c8c8"/><path d="M15 0l14 32H15z" fill="#c6dcec"/></svg><div class="ml-[27px] mt-[4px] h-[14px] border-l-2 border-[#bdbdbd]"></div></div>
        <div class="w-[48px] pt-[31px]"><svg class="ml-[7px] block" width="32" height="34" viewBox="0 0 34 46" preserveAspectRatio="none"><use href="#move"/></svg><div class="ml-[27px] mt-[4px] h-[14px] border-l-2 border-[#bdbdbd]"></div></div>
        <div class="w-[48px] pt-[31px]"><svg class="ml-[7px] block" width="32" height="34" viewBox="0 0 32 34"><path d="M2 8l8-6h20v24l-8 6H2z" fill="#e8e8e8" stroke="#c4c4c4" stroke-width="2"/><path d="M10 24l12-14M14 14q4-6 8-3M18 20q-4 6-8 3" fill="none" stroke="#bbb" stroke-width="2"/></svg><div class="ml-[27px] mt-[4px] h-[14px] border-l-2 border-[#bdbdbd]"></div></div>
        <div class="w-[48px] pt-[31px]"><svg class="ml-[7px] block" width="32" height="34" viewBox="0 0 32 34"><path d="M1 1h12v32H1z" fill="#f2f2f2" stroke="#c8c8c8" stroke-width="1.500"/><path d="M13 1h18v24H13z" fill="#c6dcec"/></svg><div class="ml-[27px] mt-[4px] h-[14px] border-l-2 border-[#bdbdbd]"></div></div>
        <div class="w-[48px] pt-[31px]"><svg class="ml-[7px] block opacity-35" width="32" height="34"><use href="#sketch"/></svg><div class="ml-[27px] mt-[4px] h-[14px] border-l-2 border-[#bdbdbd]"></div></div>
        <div class="w-[48px] pt-[31px]"><svg class="ml-[7px] block opacity-70" width="32" height="34" viewBox="0 0 34 46" preserveAspectRatio="none"><use href="#extrude"/></svg><div class="ml-[27px] mt-[4px] h-[14px] border-l-2 border-[#bdbdbd]"></div></div>
        <!-- scale bar and marker lie across the icons -->
        <div class="absolute left-[27px] top-[82px] w-[818px] h-[5px] bg-[#bcbcbc]"></div>
        <svg class="absolute left-[276px] top-[19px]" width="26" height="70" viewBox="0 0 26 70"><path d="M1 0h24v22l-12 13L1 22z" fill="#5c5c5c"/><path d="M11.500 30h3v38h-3z" fill="#5c5c5c"/></svg>
      </div>
      <svg class="absolute right-[24px] top-[32px]" width="32" height="32" viewBox="0 0 32 32"><circle cx="16" cy="16" r="11" fill="#5c5c5c"/><circle cx="16" cy="16" r="5" fill="#e6e6e6"/><path d="M13 0h6v6h-6zM13 26h6v6h-6zM0 13h6v6H0zM26 13h6v6h-6zM3 7l4-4 5 5-4 4zM25 3l4 4-5 5-4-4zM3 25l5-5 4 4-5 5zM20 24l4-4 5 5-4 4z" fill="#5c5c5c"/></svg>
    </div>
  </div>
</body>
</html>
